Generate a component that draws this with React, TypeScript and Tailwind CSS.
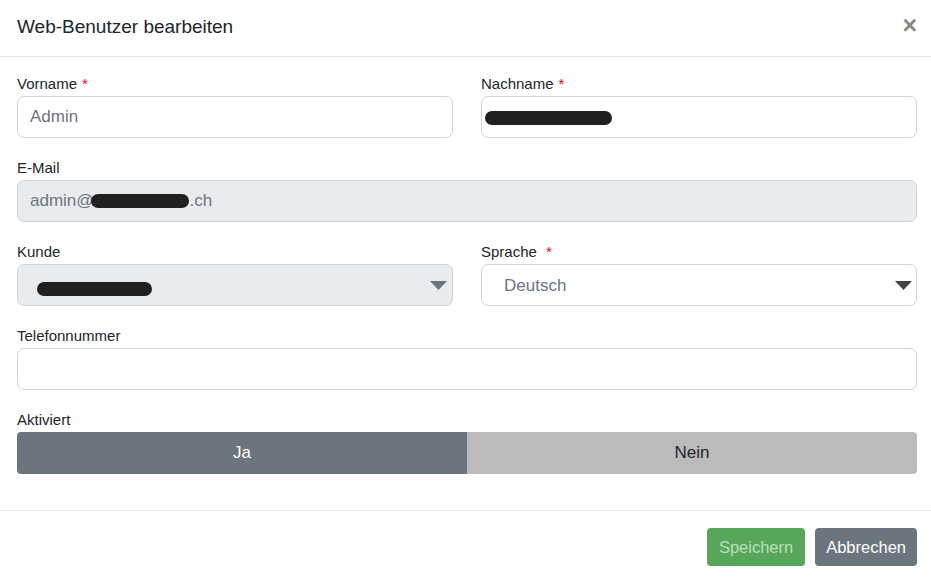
import React from "react";

const font = { fontFamily: '"Liberation Sans", Arial, sans-serif' };

function Label({ text, required, wide }: { text: string; required?: boolean; wide?: boolean }) {
  return (
    <div className="text-[15px] leading-[20px] mb-[2px] text-[#212529]">
      {text}
      {required && <span className={`text-[#ff0000] ${wide ? "ml-[9px]" : "ml-[5px]"}`}>*</span>}
    </div>
  );
}

function Blob({ w, className = "" }: { w: number; className?: string }) {
  // redaction marker as in the screenshot
  return <span className={`inline-block h-[14px] rounded-full bg-[#202020] ${className}`} style={{ width: w }} />;
}

function Caret({ color }: { color: string }) {
  return (
    <svg width="17" height="9" viewBox="0 0 17 9" className="shrink-0">
      <polygon points="0,0 17,0 8.5,9" fill={color} />
    </svg>
  );
}

export default function App() {
  return (
    <div className="w-[931px] h-[583px] bg-white text-[#212529] overflow-hidden" style={font}>
      {/* Header */}
      <div className="h-[57px] border-b border-[#e5e5e5] flex items-center justify-between pl-[17px] pr-[14px]">
        <h1 className="text-[19px] leading-[24px] mt-[-3px]">Web-Benutzer bearbeiten</h1>
        <button className="text-[#888888] text-[25px] font-bold leading-none mt-[-5px]">×</button>
      </div>

      {/* Body */}
      <div className="pl-[17px] pr-[14px] pt-[17px] pb-[36px] flex flex-col gap-[20px]">
        <div className="grid grid-cols-2 gap-[28px]">
          <div>
            <Label text="Vorname" required />
            <div className="h-[42px] border border-[#ced4da] rounded-[7px] flex items-center px-[12px] text-[17px] text-[#6c757d]">
              Admin
            </div>
          </div>
          <div>
            <Label text="Nachname" required />
            <div className="h-[42px] border border-[#ced4da] rounded-[7px] flex items-center px-[3px]">
              <Blob w={127} className="mt-[2px]" />
            </div>
          </div>
        </div>

        <div>
          <Label text="E-Mail" />
          <div className="h-[42px] border border-[#ced4da] rounded-[7px] bg-[#e9ecef] flex items-center px-[12px] text-[17px] text-[#6c757d]">
            admin@
            <Blob w={98} className="-ml-[3px] mr-[1px]" />
            .ch
          </div>
        </div>

        <div className="grid grid-cols-2 gap-[28px]">
          <div>
            <Label text="Kunde" />
            <div className="h-[42px] border border-[#ced4da] rounded-[7px] bg-[#e9ecef] flex items-center justify-between pl-[19px] pr-[5px]">
              <Blob w={115} className="mt-[7px]" />
              <Caret color="#6c757d" />
            </div>
          </div>
          <div>
            <Label text="Sprache" required wide />
            <div className="h-[42px] border border-[#ced4da] rounded-[7px] flex items-center justify-between pl-[22px] pr-[4px] text-[17px] text-[#6c757d]">
              <span className="mt-[2px]">Deutsch</span>
              <Caret color="#444444" />
            </div>
          </div>
        </div>

        <div>
          <Label text="Telefonnummer" />
          <div className="h-[42px] border border-[#ced4da] rounded-[7px]" />
        </div>

        <div>
          <Label text="Aktiviert" />
          <div className="grid grid-cols-2 h-[42px] text-[17px] rounded-[4px] overflow-hidden">
            <button className="bg-[#6c757d] text-white">Ja</button>
            <button className="bg-[#bbbbbb] text-[#212529]">Nein</button>
          </div>
        </div>
      </div>

      {/* Footer */}
      <div className="border-t border-[#e9e9e9] pt-[17px] pl-[17px] pr-[14px] flex justify-end gap-[10px]">
        <button className="h-[38px] px-[12px] rounded-[4px] bg-[#58a65a] text-[#b9e0ba] text-[16.5px]">Speichern</button>
        <button className="h-[38px] px-[11px] rounded-[4px] bg-[#6c757d] text-white text-[16.5px]">Abbrechen</button>
      </div>
    </div>
  );
}
